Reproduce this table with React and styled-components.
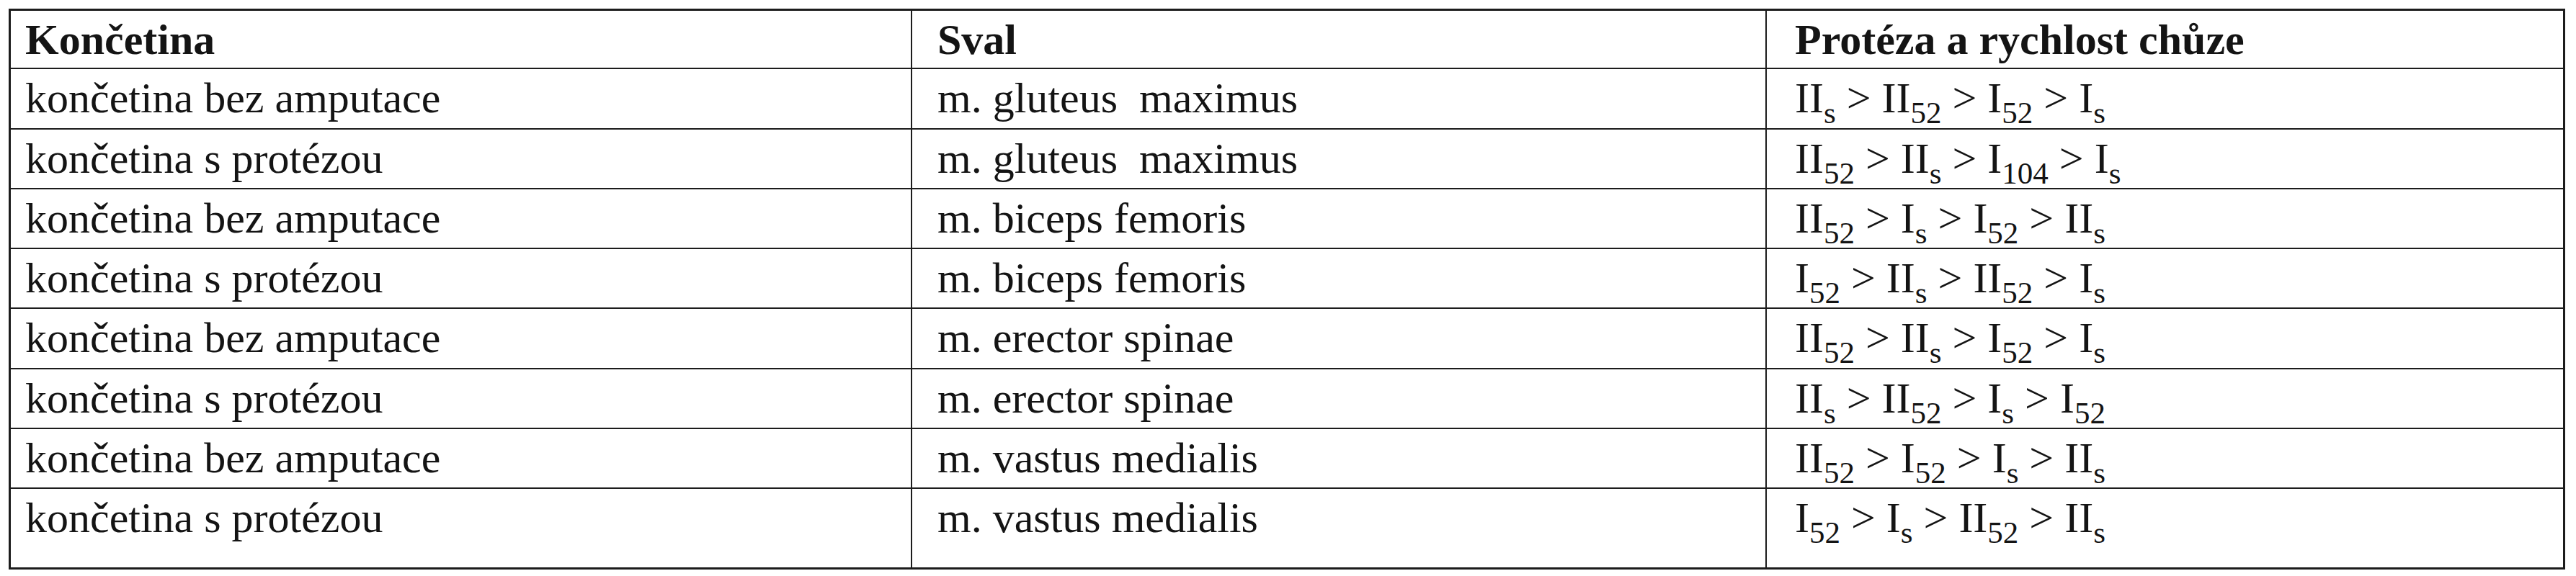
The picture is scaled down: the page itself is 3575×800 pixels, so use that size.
import React from "react";
import styled, { createGlobalStyle } from "styled-components";

const Global = createGlobalStyle`
  html, body { margin: 0; padding: 0; background: #ffffff; }
  body { font-family: "Liberation Serif", "Times New Roman", serif; color: #141414; }
`;

const Page = styled.div`
  padding: 12px 0 0 12px;
`;

const Table = styled.div`
  display: grid;
  grid-template-columns: 1251px 1186px 1108px;
  grid-template-rows: 81px 84px 83px 83px 83px 84px 83px 83px 112px;
  border-top: 3px solid #1c1c1c;
  border-left: 3px solid #1c1c1c;
  width: max-content;
`;

const Cell = styled.div`
  box-sizing: border-box;
  border-right: ${(p) => (p.$last ? 3 : 2)}px solid #1c1c1c;
  border-bottom: ${(p) => (p.$bottom ? 3 : 2)}px solid #1c1c1c;
  padding: 6px 0 0 ${(p) => p.$pad}px;
  font-size: 60px;
  line-height: 69px;
  font-weight: ${(p) => (p.$head ? 700 : 400)};
  white-space: pre;
`;

const Sub = styled.span`
  font-size: 43px;
  line-height: 0;
  vertical-align: -15px;
`;

const pads = [20, 35, 39];

const rows = [
  ["končetina bez amputace", "m. gluteus  maximus", [["II", "s"], ["II", "52"], ["I", "52"], ["I", "s"]]],
  ["končetina s protézou", "m. gluteus  maximus", [["II", "52"], ["II", "s"], ["I", "104"], ["I", "s"]]],
  ["končetina bez amputace", "m. biceps femoris", [["II", "52"], ["I", "s"], ["I", "52"], ["II", "s"]]],
  ["končetina s protézou", "m. biceps femoris", [["I", "52"], ["II", "s"], ["II", "52"], ["I", "s"]]],
  ["končetina bez amputace", "m. erector spinae", [["II", "52"], ["II", "s"], ["I", "52"], ["I", "s"]]],
  ["končetina s protézou", "m. erector spinae", [["II", "s"], ["II", "52"], ["I", "s"], ["I", "52"]]],
  ["končetina bez amputace", "m. vastus medialis", [["II", "52"], ["I", "52"], ["I", "s"], ["II", "s"]]],
  ["končetina s protézou", "m. vastus medialis", [["I", "52"], ["I", "s"], ["II", "52"], ["II", "s"]]],
];

function Formula({ parts }) {
  return (
    <>
      {parts.map(([base, sub], i) => (
        <React.Fragment key={i}>
          {i > 0 ? " > " : ""}
          {base}
          <Sub>{sub}</Sub>
        </React.Fragment>
      ))}
    </>
  );
}

export default function App() {
  const headers = ["Končetina", "Sval", "Protéza a rychlost chůze"];
  return (
    <Page>
      <Global />
      <Table>
        {headers.map((h, i) => (
          <Cell key={h} $head $pad={pads[i]} $last={i === 2}>
            {h}
          </Cell>
        ))}
        {rows.map((r, ri) => {
          const bottom = ri === rows.length - 1;
          return (
            <React.Fragment key={ri}>
              <Cell $pad={pads[0]} $bottom={bottom}>{r[0]}</Cell>
              <Cell $pad={pads[1]} $bottom={bottom}>{r[1]}</Cell>
              <Cell $pad={pads[2]} $bottom={bottom} $last>
                <Formula parts={r[2]} />
              </Cell>
            </React.Fragment>
          );
        })}
      </Table>
    </Page>
  );
}
